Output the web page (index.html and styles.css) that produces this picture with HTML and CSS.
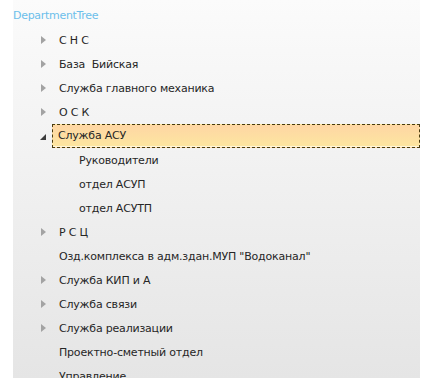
FILE: index.html
```html
<!DOCTYPE html>
<html lang="en">
<head>
  <meta charset="UTF-8">
  <title>DepartmentTree</title>
  <link rel="stylesheet" href="styles.css">
</head>
<body>
  <div class="tree-panel">
    <div class="tree-title">DepartmentTree</div>

    <ul class="tree">
      <li class="node"><span class="arrow"></span><span class="label">С Н С</span></li>
      <li class="node"><span class="arrow"></span><span class="label">База&nbsp; Бийская</span></li>
      <li class="node"><span class="arrow"></span><span class="label">Служба главного механика</span></li>
      <li class="node"><span class="arrow"></span><span class="label">О С К</span></li>
      <li class="node selected"><span class="arrow open"></span><span class="label">Служба АСУ</span></li>
      <li class="node child"><span class="label">Руководители</span></li>
      <li class="node child"><span class="label">отдел АСУП</span></li>
      <li class="node child"><span class="label">отдел АСУТП</span></li>
      <li class="node"><span class="arrow"></span><span class="label">Р С Ц</span></li>
      <li class="node"><span class="arrow none"></span><span class="label">Озд.комплекса в адм.здан.МУП "Водоканал"</span></li>
      <li class="node"><span class="arrow"></span><span class="label">Служба КИП и А</span></li>
      <li class="node"><span class="arrow"></span><span class="label">Служба связи</span></li>
      <li class="node"><span class="arrow"></span><span class="label">Служба реализации</span></li>
      <li class="node"><span class="arrow none"></span><span class="label">Проектно-сметный отдел</span></li>
      <li class="node"><span class="arrow none"></span><span class="label">Управление</span></li>
    </ul>
  </div>
</body>
</html>
```

FILE: styles.css
```css
/* General Styles */
body {
  margin: 0;
  padding: 0;
  background-color: #fff;
  font-family: 'DejaVu Sans', sans-serif;
  font-size: 11px;
  color: #262626;
}

.tree-panel {
  margin-left: 13px;
  width: 407px;
  height: 378px;
  overflow: hidden;
  background: linear-gradient(to bottom, #fbfbfb, #e5e5e5);
}

.tree-title {
  height: 28px;
  padding-top: 9px;
  box-sizing: border-box;
  color: #6cbfeb;
  font-size: 11px;
  letter-spacing: -0.3px;
}

.tree {
  list-style: none;
  margin: 0;
  padding: 0;
}

.node {
  display: flex;
  align-items: center;
  height: 24px;
  padding-left: 28px;
}

.label {
  letter-spacing: -0.2px;
}

.arrow {
  width: 0;
  height: 0;
  margin-right: 13px;
  border-top: 4.5px solid transparent;
  border-bottom: 4.5px solid transparent;
  border-left: 5px solid #a3a3a3;
}

.arrow.none {
  border-left-color: transparent;
}

.arrow.open {
  border-top: 0;
  border-left: 6px solid transparent;
  border-bottom: 6px solid #3c3c3c;
  margin-right: 6px;
  margin-left: -1px;
  margin-top: 1px;
}

.node.selected .label {
  flex: 1;
  height: 24px;
  line-height: 22px;
  padding-left: 5px;
  box-sizing: border-box;
  border: 1px dashed #4a3c10;
  background: linear-gradient(to bottom, #fed6a4, #fde6a0);
  box-shadow: inset 0 -1px 0 #fff7dc;
}

.node.child {
  padding-left: 66px;
}
```
